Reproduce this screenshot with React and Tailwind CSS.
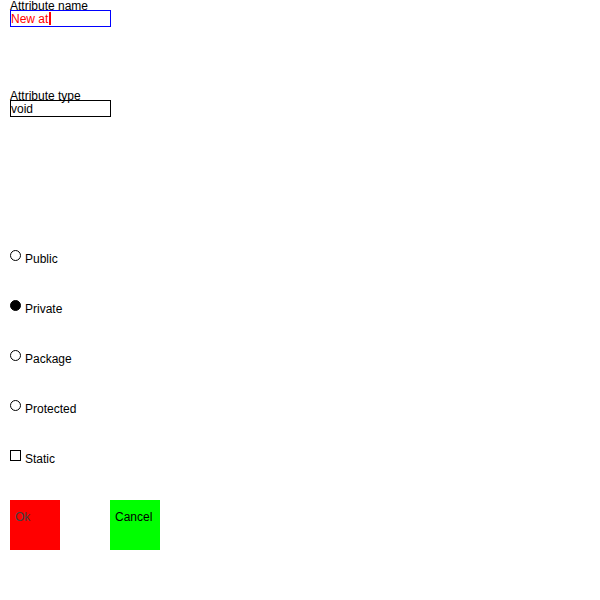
export default function App() {
  const options = ['Public', 'Private', 'Package', 'Protected'];
  const selected = 'Private';

  return (
    <div className="w-[600px] h-[600px] bg-white pl-[10px] text-[12px] text-black font-['Liberation_Sans',Arial,sans-serif]">
      <div className="h-[10px] leading-[12px]">Attribute name</div>
      <div className="w-[101px] h-[17px] border border-[#0000ff] flex items-center">
        <span className="text-[#ff0000] leading-[14px]">New at</span>
        <span className="w-[2px] h-[13px] bg-[#ff0000] ml-[1px]" />
      </div>

      <div className="h-[10px] leading-[12px] mt-[63px]">Attribute type</div>
      <div className="w-[101px] h-[17px] border border-black flex items-center">
        <span className="leading-[14px]">void</span>
      </div>

      <div className="mt-[133px]">
        {options.map((opt) => (
          <div key={opt} className="h-[50px] flex items-start">
            <span
              className={`w-[11px] h-[11px] rounded-full border border-black ${
                opt === selected ? 'bg-black' : 'bg-white'
              }`}
            />
            <span className="ml-[4px] mt-[2px] leading-[14px]">{opt}</span>
          </div>
        ))}
        <div className="h-[50px] flex items-start">
          <span className="w-[11px] h-[11px] border border-black bg-white" />
          <span className="ml-[4px] mt-[2px] leading-[14px]">Static</span>
        </div>
      </div>

      <div className="flex gap-[50px]">
        <div className="w-[50px] h-[50px] bg-[#ff0000] pl-[5px] pt-[10px] leading-[14px] text-[#404040]">Ok</div>
        <div className="w-[50px] h-[50px] bg-[#00ff00] pl-[5px] pt-[10px] leading-[14px] text-black">Cancel</div>
      </div>
    </div>
  );
}
